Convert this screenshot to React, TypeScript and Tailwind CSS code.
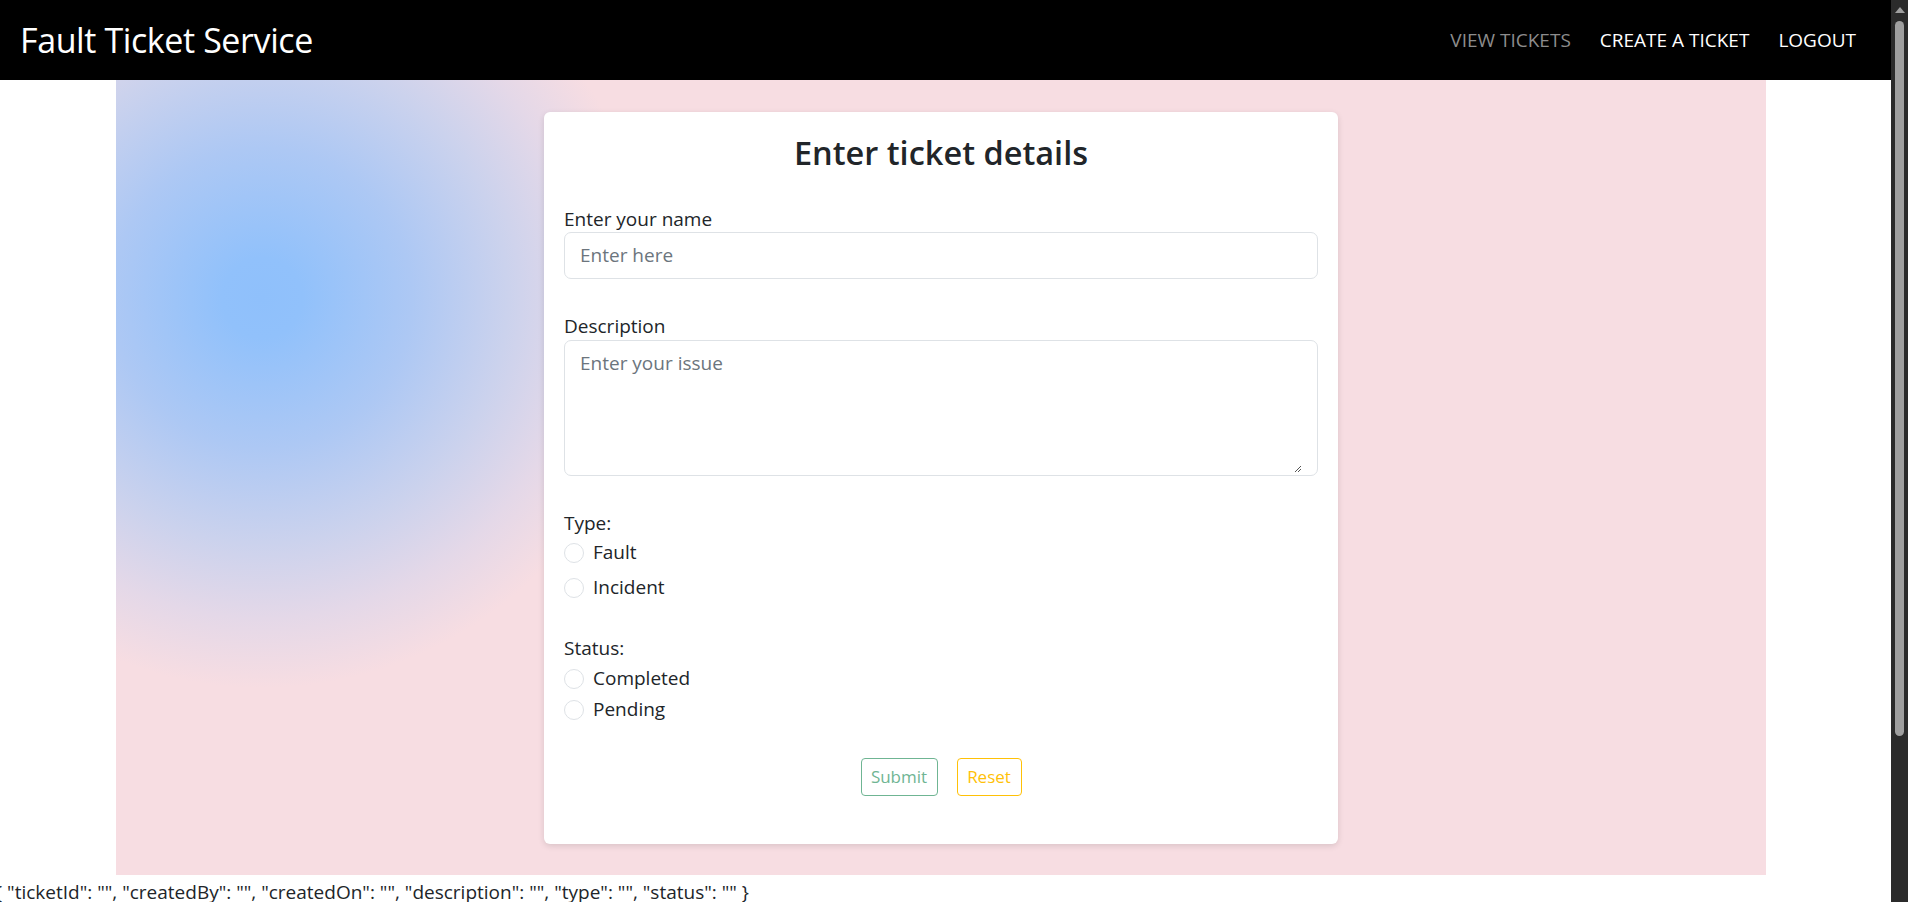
import React from 'react';

const font = "font-['Open_Sans','Noto_Sans',sans-serif]";

const NavBar = () => (
  <nav className="h-[80px] bg-black flex items-center justify-between pl-[20px] pr-[35px]">
    <span className="text-white text-[34px] leading-none tracking-[-0.4px]">Fault Ticket Service</span>
    <div className="flex items-center gap-[29px] text-[19px] uppercase">
      <a className="text-[#8c8c8c]">View Tickets</a>
      <a className="text-white">Create a Ticket</a>
      <a className="text-white">Logout</a>
    </div>
  </nav>
);

const Radio = ({ label, h }: { label: string; h: string }) => (
  <label className={`flex items-center gap-[9px] ${h}`}>
    <span className="w-[20px] h-[20px] rounded-full border border-[#dee2e6] bg-white shrink-0" />
    <span className="text-[19px] text-[#212529]">{label}</span>
  </label>
);

const TicketForm = () => (
  <div className="w-[794px] mx-auto mt-[32px] mb-[31px] bg-white rounded-[6px] shadow-[0_2px_6px_rgba(0,0,0,0.12)] px-[20px] pt-[17px] pb-[48px]">
    <h2 className="text-center text-[32.5px] leading-[48px] font-semibold text-[#212529]">Enter ticket details</h2>

    {/* Name */}
    <div className="mt-[29px] text-[19px] leading-[26px] text-[#212529]">Enter your name</div>
    <div className="h-[47px] border border-[#dee2e6] rounded-[7px] flex items-center px-[15px] text-[19px] text-[#6c757d]">
      Enter here
    </div>

    {/* Description */}
    <div className="mt-[34px] text-[19px] leading-[26px] text-[#212529]">Description</div>
    <div className="mt-[1px] h-[136px] border border-[#dee2e6] rounded-[7px] px-[15px] pt-[8px] text-[19px] text-[#6c757d] flex flex-col">
      <span>Enter your issue</span>
      <div className="mt-auto mb-[2px] self-end leading-none">
        <svg width="8" height="8" viewBox="0 0 8 8">
          <path d="M7 1 L1 7 M7 4 L4 7" stroke="#555" strokeWidth="1" />
        </svg>
      </div>
    </div>

    {/* Type */}
    <div className="mt-[35px] text-[19px] leading-[24px] text-[#212529]">Type:</div>
    <Radio label="Fault" h="h-[35px]" />
    <Radio label="Incident" h="h-[35px]" />

    {/* Status */}
    <div className="mt-[31px] text-[19px] leading-[24px] text-[#212529]">Status:</div>
    <div className="mt-[3px]">
      <Radio label="Completed" h="h-[31px]" />
      <Radio label="Pending" h="h-[31px]" />
    </div>

    <div className="mt-[33px] flex justify-center gap-[19px]">
      <button className="h-[38px] w-[77px] border border-[#6fb593] rounded-[4px] text-[#6fb593] text-[17px]">Submit</button>
      <button className="h-[38px] w-[65px] border border-[#ffc107] rounded-[4px] text-[#ffc107] text-[17px]">Reset</button>
    </div>
  </div>
);

const ScrollBar = () => (
  <div className="w-[17px] bg-[#2b2b2b] flex flex-col items-center pt-[7px]">
    <div className="w-0 h-0 border-l-[5px] border-r-[5px] border-b-[6px] border-l-transparent border-r-transparent border-b-[#9f9f9f]" />
    <div className="mt-[8px] w-[9px] h-[715px] rounded-full bg-[#9f9f9f]" />
  </div>
);

export default function App() {
  return (
    <div className={`h-[902px] overflow-hidden flex bg-white ${font}`}>
      <div className="flex-1 min-w-0">
        <NavBar />
        <main className="ml-[116px] w-[1650px] bg-[#f7dde2] bg-[radial-gradient(circle_at_146px_218px,#8fc0fb_0px,#91c1fb_40px,#adc8f4_150px,#cbd2ed_245px,#e4d8e8_320px,#f7dde2_390px)] pt-[0.1px] pb-[0.1px]">
          <TicketForm />
        </main>
        <div className="-ml-[5px] mt-[2px] text-[19px] leading-[30px] text-[#212529] whitespace-nowrap">
          {'{ "ticketId": "", "createdBy": "", "createdOn": "", "description": "", "type": "", "status": "" }'}
        </div>
      </div>
      <ScrollBar />
    </div>
  );
}
